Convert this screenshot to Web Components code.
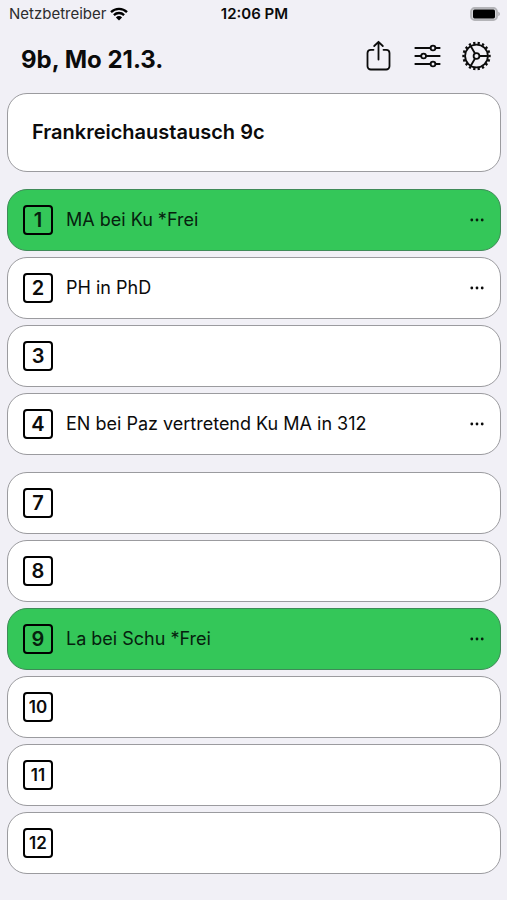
<!DOCTYPE html>
<html lang="de">
<head>
  <meta charset="UTF-8">
  <meta name="viewport" content="width=device-width, initial-scale=1.0">
  <title>Vertretungsplan</title>
  <style>
    body {
      margin: 0;
      background-color: #f1f0f6;
      color: #0b0b0b;
      font-family: Inter, "Liberation Sans", sans-serif;
    }
  </style>
</head>
<body>
  <plan-app>
    <status-bar slot="status" carrier="Netzbetreiber" time="12:06 PM"></status-bar>
    <plan-header slot="header">9b, Mo 21.3.</plan-header>
    <day-note>Frankreichaustausch 9c</day-note>
    <lesson-group label="Vormittag">
      <lesson-row period="1" free>MA bei Ku *Frei</lesson-row>
      <lesson-row period="2">PH in PhD</lesson-row>
      <lesson-row period="3"></lesson-row>
      <lesson-row period="4">EN bei Paz vertretend Ku MA in 312</lesson-row>
    </lesson-group>
    <lesson-group label="Nachmittag">
      <lesson-row period="7"></lesson-row>
      <lesson-row period="8"></lesson-row>
      <lesson-row period="9" free>La bei Schu *Frei</lesson-row>
      <lesson-row period="10"></lesson-row>
      <lesson-row period="11"></lesson-row>
      <lesson-row period="12"></lesson-row>
    </lesson-group>
  </plan-app>

  <script>
    class PlanApp extends HTMLElement {
      constructor() {
        super();
        const shadow = this.attachShadow({ mode: 'open' });
        shadow.innerHTML = `
          <style>
            :host {
              display: block;
              --line-color: #9b9b9f;
              --card-color: #ffffff;
              --free-color: #34c759;
              --radius: 20px;
            }

            main {
              display: flex;
              flex-direction: column;
              gap: 17px;
              padding: 0 6px 26px 7px;
            }
          </style>
          <slot name="status"></slot>
          <slot name="header"></slot>
          <main><slot></slot></main>
        `;
      }
    }

    class StatusBar extends HTMLElement {
      constructor() {
        super();
        const shadow = this.attachShadow({ mode: 'open' });
        shadow.innerHTML = `
          <style>
            :host {
              display: grid;
              grid-template-columns: 1fr auto 1fr;
              align-items: center;
              height: 27px;
              padding: 0 7px 0 9px;
              font-size: 15px;
              line-height: 18px;
            }

            .carrier {
              display: flex;
              align-items: center;
              gap: 4px;
              color: #2c2c2e;
            }

            .time {
              font-weight: 600;
            }

            svg {
              display: block;
            }

            .battery {
              justify-self: end;
            }
          </style>
          <div class="carrier">
            <span>${this.getAttribute('carrier')}</span>
            <svg width="18" height="14" viewBox="0 0 18 14" fill="none" stroke="#000" stroke-width="2.3">
              <path d="M1 5.1a11.4 11.4 0 0 1 16 0"/>
              <path d="M3.9 8.1a7.3 7.3 0 0 1 10.2 0"/>
              <path d="M9 13.6 5.9 10.4a4.4 4.4 0 0 1 6.2 0z" fill="#000" stroke="none"/>
            </svg>
          </div>
          <div class="time">${this.getAttribute('time')}</div>
          <svg class="battery" width="30" height="14" viewBox="0 0 30 14">
            <rect x="1" y="1" width="26" height="12" rx="3.6" fill="#d4d4d8" stroke="#b4b4b8" stroke-width="1.8"/>
            <rect x="3" y="2.6" width="22" height="8.8" rx="1.6" fill="#000"/>
            <path d="M28.2 4.8c1.2.4 1.8 1.2 1.8 2.2s-.6 1.8-1.8 2.2z" fill="#b4b4b8"/>
          </svg>
        `;
      }
    }

    class PlanHeader extends HTMLElement {
      constructor() {
        super();
        const shadow = this.attachShadow({ mode: 'open' });
        shadow.innerHTML = `
          <style>
            :host {
              display: flex;
              align-items: center;
              justify-content: space-between;
              height: 66px;
              padding: 0 15px 0 21px;
            }

            h1 {
              margin: 0;
              font-size: 24px;
              line-height: 32px;
              font-weight: 700;
            }

            nav {
              display: flex;
              gap: 18px;
              padding-bottom: 8px;
            }

            button {
              display: block;
              margin: 0;
              padding: 0;
              border: 0;
              background: none;
              color: #0b0b0b;
            }

            svg {
              display: block;
            }
          </style>
          <h1><slot></slot></h1>
          <nav>
            <button type="button" aria-label="Teilen">
              <svg width="31" height="32" viewBox="0 0 31 32" fill="none" stroke="currentColor" stroke-width="1.8" stroke-linecap="round" stroke-linejoin="round">
                <path d="M10.5 9.8H7.8A3.3 3.3 0 0 0 4.5 13v13.2a3.3 3.3 0 0 0 3.3 3.3h15.4a3.3 3.3 0 0 0 3.3-3.3V13a3.3 3.3 0 0 0-3.3-3.2h-2.7"/>
                <path d="M15.5 19.5V2.2M11.2 6l4.3-4.2L19.8 6"/>
              </svg>
            </button>
            <button type="button" aria-label="Filter">
              <svg width="31" height="32" viewBox="0 0 31 32" fill="none" stroke="currentColor" stroke-width="1.8" stroke-linecap="round">
                <path d="M3.3 8h15.2M23.5 8h4.2M3.3 16h5.8M14.1 16h13.6M3.3 24h15.2M23.5 24h4.2"/>
                <circle cx="21" cy="8" r="2.4"/>
                <circle cx="11.6" cy="16" r="2.4"/>
                <circle cx="21" cy="24" r="2.4"/>
              </svg>
            </button>
            <button type="button" aria-label="Einstellungen">
              <svg width="31" height="32" viewBox="0 0 31 32" fill="none" stroke="currentColor" stroke-width="1.8">
                <circle cx="15.5" cy="16" r="11.4"/>
                <circle cx="15.5" cy="16" r="13" stroke-width="2.4" pathLength="36" stroke-dasharray="1 1" stroke-dashoffset="0.5"/>
                <circle cx="15.5" cy="16" r="2.9"/>
                <path d="M18.4 16h8.4M14 13.5 9.8 6.2M14 18.5l-4.2 7.3"/>
              </svg>
            </button>
          </nav>
        `;
      }
    }

    class DayNote extends HTMLElement {
      constructor() {
        super();
        const shadow = this.attachShadow({ mode: 'open' });
        shadow.innerHTML = `
          <style>
            :host {
              display: block;
              padding: 25px 24px;
              border: 1px solid var(--line-color);
              border-radius: var(--radius);
              background-color: var(--card-color);
            }

            h2 {
              margin: 0;
              font-size: 20px;
              line-height: 27px;
              font-weight: 600;
            }
          </style>
          <h2><slot></slot></h2>
        `;
      }
    }

    class LessonGroup extends HTMLElement {
      constructor() {
        super();
        const shadow = this.attachShadow({ mode: 'open' });
        shadow.innerHTML = `
          <style>
            :host {
              display: block;
            }

            section {
              display: flex;
              flex-direction: column;
              gap: 6px;
            }
          </style>
          <section aria-label="${this.getAttribute('label')}"><slot></slot></section>
        `;
      }
    }

    class LessonRow extends HTMLElement {
      constructor() {
        super();
        const period = this.getAttribute('period');
        const hasLesson = this.textContent.trim() !== '';
        const more = `
          <button type="button" aria-label="Mehr zu Stunde ${period}">
            <svg width="16" height="16" viewBox="0 0 16 16" fill="currentColor">
              <circle cx="2.8" cy="8" r="1.4"/>
              <circle cx="8" cy="8" r="1.4"/>
              <circle cx="13.2" cy="8" r="1.4"/>
            </svg>
          </button>
        `;
        const shadow = this.attachShadow({ mode: 'open' });
        shadow.innerHTML = `
          <style>
            :host {
              display: flex;
              align-items: center;
              gap: 13px;
              padding: 15px;
              border: 1px solid var(--line-color);
              border-radius: var(--radius);
              background-color: var(--card-color);
              font-size: 18px;
              line-height: 24px;
            }

            :host([free]) {
              border-color: #3f8a58;
              background-color: var(--free-color);
              color: #06210e;
            }

            .period {
              flex: none;
              box-sizing: border-box;
              width: 30px;
              height: 30px;
              border: 2px solid #000;
              border-radius: 4px;
              font-size: 20px;
              line-height: 26px;
              font-weight: 600;
              text-align: center;
            }

            .period.wide {
              font-size: 17px;
            }

            .lesson {
              flex: 1;
            }

            button {
              display: block;
              margin: 0;
              padding: 0;
              border: 0;
              background: none;
              color: inherit;
            }

            svg {
              display: block;
            }
          </style>
          <div class="period ${period.length > 1 ? 'wide' : ''}">${period}</div>
          <div class="lesson"><slot></slot></div>
          ${hasLesson ? more : ''}
        `;
      }
    }

    customElements.define('plan-app', PlanApp);
    customElements.define('status-bar', StatusBar);
    customElements.define('plan-header', PlanHeader);
    customElements.define('day-note', DayNote);
    customElements.define('lesson-group', LessonGroup);
    customElements.define('lesson-row', LessonRow);
  </script>
</body>
</html>
